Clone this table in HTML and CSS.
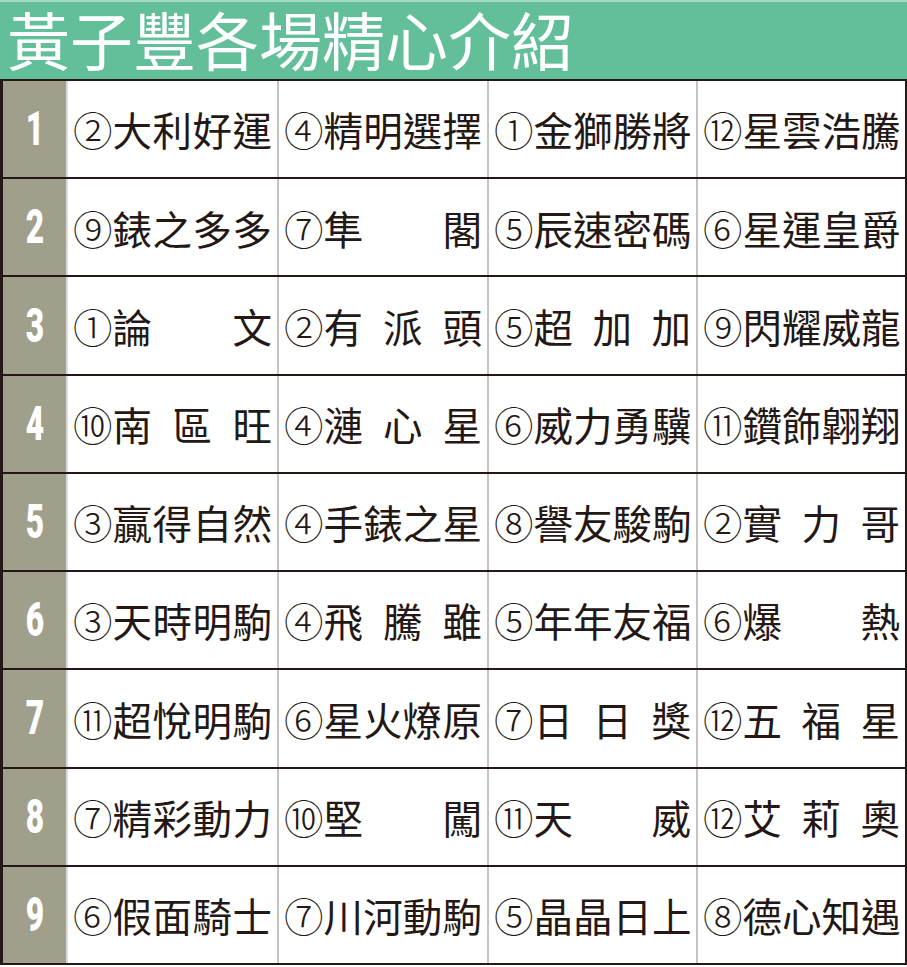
FILE: index.html
```html
<!DOCTYPE html>
<html lang="zh-Hant">
<head>
<meta charset="utf-8">
<title>黃子豐各場精心介紹</title>
<link rel="stylesheet" href="styles.css">
</head>
<body>
<header class="title"><span class="title-text">黃子豐各場精心介紹</span></header>
<main class="board">
  <div class="row">
    <div class="no"><span>1</span></div>
    <div class="cell first"><span class="num">②</span><span class="name"><i>大</i><i>利</i><i>好</i><i>運</i></span></div>
    <div class="cell"><span class="num">④</span><span class="name"><i>精</i><i>明</i><i>選</i><i>擇</i></span></div>
    <div class="cell"><span class="num">①</span><span class="name"><i>金</i><i>獅</i><i>勝</i><i>將</i></span></div>
    <div class="cell"><span class="num">⑫</span><span class="name"><i>星</i><i>雲</i><i>浩</i><i>騰</i></span></div>
  </div>
  <div class="row">
    <div class="no"><span>2</span></div>
    <div class="cell first"><span class="num">⑨</span><span class="name"><i>錶</i><i>之</i><i>多</i><i>多</i></span></div>
    <div class="cell"><span class="num">⑦</span><span class="name"><i>隼</i><i>閣</i></span></div>
    <div class="cell"><span class="num">⑤</span><span class="name"><i>辰</i><i>速</i><i>密</i><i>碼</i></span></div>
    <div class="cell"><span class="num">⑥</span><span class="name"><i>星</i><i>運</i><i>皇</i><i>爵</i></span></div>
  </div>
  <div class="row">
    <div class="no"><span>3</span></div>
    <div class="cell first"><span class="num">①</span><span class="name"><i>論</i><i>文</i></span></div>
    <div class="cell"><span class="num">②</span><span class="name"><i>有</i><i>派</i><i>頭</i></span></div>
    <div class="cell"><span class="num">⑤</span><span class="name"><i>超</i><i>加</i><i>加</i></span></div>
    <div class="cell"><span class="num">⑨</span><span class="name"><i>閃</i><i>耀</i><i>威</i><i>龍</i></span></div>
  </div>
  <div class="row">
    <div class="no"><span>4</span></div>
    <div class="cell first"><span class="num">⑩</span><span class="name"><i>南</i><i>區</i><i>旺</i></span></div>
    <div class="cell"><span class="num">④</span><span class="name"><i>漣</i><i>心</i><i>星</i></span></div>
    <div class="cell"><span class="num">⑥</span><span class="name"><i>威</i><i>力</i><i>勇</i><i>驥</i></span></div>
    <div class="cell"><span class="num">⑪</span><span class="name"><i>鑽</i><i>飾</i><i>翺</i><i>翔</i></span></div>
  </div>
  <div class="row">
    <div class="no"><span>5</span></div>
    <div class="cell first"><span class="num">③</span><span class="name"><i>贏</i><i>得</i><i>自</i><i>然</i></span></div>
    <div class="cell"><span class="num">④</span><span class="name"><i>手</i><i>錶</i><i>之</i><i>星</i></span></div>
    <div class="cell"><span class="num">⑧</span><span class="name"><i>譽</i><i>友</i><i>駿</i><i>駒</i></span></div>
    <div class="cell"><span class="num">②</span><span class="name"><i>實</i><i>力</i><i>哥</i></span></div>
  </div>
  <div class="row">
    <div class="no"><span>6</span></div>
    <div class="cell first"><span class="num">③</span><span class="name"><i>天</i><i>時</i><i>明</i><i>駒</i></span></div>
    <div class="cell"><span class="num">④</span><span class="name"><i>飛</i><i>騰</i><i>雖</i></span></div>
    <div class="cell"><span class="num">⑤</span><span class="name"><i>年</i><i>年</i><i>友</i><i>福</i></span></div>
    <div class="cell"><span class="num">⑥</span><span class="name"><i>爆</i><i>熱</i></span></div>
  </div>
  <div class="row">
    <div class="no"><span>7</span></div>
    <div class="cell first"><span class="num">⑪</span><span class="name"><i>超</i><i>悅</i><i>明</i><i>駒</i></span></div>
    <div class="cell"><span class="num">⑥</span><span class="name"><i>星</i><i>火</i><i>燎</i><i>原</i></span></div>
    <div class="cell"><span class="num">⑦</span><span class="name"><i>日</i><i>日</i><i>獎</i></span></div>
    <div class="cell"><span class="num">⑫</span><span class="name"><i>五</i><i>福</i><i>星</i></span></div>
  </div>
  <div class="row">
    <div class="no"><span>8</span></div>
    <div class="cell first"><span class="num">⑦</span><span class="name"><i>精</i><i>彩</i><i>動</i><i>力</i></span></div>
    <div class="cell"><span class="num">⑩</span><span class="name"><i>堅</i><i>闖</i></span></div>
    <div class="cell"><span class="num">⑪</span><span class="name"><i>天</i><i>威</i></span></div>
    <div class="cell"><span class="num">⑫</span><span class="name"><i>艾</i><i>莉</i><i>奧</i></span></div>
  </div>
  <div class="row">
    <div class="no"><span>9</span></div>
    <div class="cell first"><span class="num">⑥</span><span class="name"><i>假</i><i>面</i><i>騎</i><i>士</i></span></div>
    <div class="cell"><span class="num">⑦</span><span class="name"><i>川</i><i>河</i><i>動</i><i>駒</i></span></div>
    <div class="cell"><span class="num">⑤</span><span class="name"><i>晶</i><i>晶</i><i>日</i><i>上</i></span></div>
    <div class="cell"><span class="num">⑧</span><span class="name"><i>德</i><i>心</i><i>知</i><i>遇</i></span></div>
  </div>
</main>
</body>
</html>
```

FILE: styles.css
```css
html, body {
  margin: 0;
  padding: 0;
  background: #ffffff;
}

body {
  width: 907px;
  font-family: "Noto Sans CJK TC", "Noto Sans CJK JP", sans-serif;
  color: #231815;
}

.title {
  box-sizing: border-box;
  height: 79px;
  background: #63bf99;
  border-top: 2px solid #a3d9c2;
  display: flex;
  align-items: center;
  padding: 0 0 6px 7px;
}

.title-text {
  color: #ffffff;
  font-size: 63px;
  font-weight: 400;
  line-height: 1.1;
  white-space: nowrap;
}

.board {
  box-sizing: border-box;
  height: 886px;
  display: grid;
  grid-template-rows: repeat(9, 1fr);
  row-gap: 2px;
  padding: 2px 2px 2px 3px;
  background: #231815;
}

.row {
  display: grid;
  grid-template-columns: 63px 211px 210px 209px 209px;
  min-height: 0;
}

.no {
  background: #a09f8b;
  display: flex;
  align-items: center;
  justify-content: center;
}

.no span {
  display: block;
  color: #ffffff;
  font-family: Roboto, "Liberation Sans", sans-serif;
  font-weight: 900;
  font-size: 48px;
  line-height: 1;
  transform: scaleX(0.66);
}

.cell {
  background: #ffffff;
  border-left: 2px solid #c4c4c4;
  display: flex;
  align-items: center;
  padding: 0 5px 0 5px;
  font-size: 39.5px;
  line-height: 1;
  white-space: nowrap;
}

.cell.first {
  border-left-color: #dcdcd6;
}

.num {
  flex: none;
  font-family: "Noto Sans CJK JP", "Noto Sans CJK TC", sans-serif;
  font-weight: 300;
}

.name {
  flex: 1;
  display: flex;
  justify-content: space-between;
}

.name i {
  font-style: normal;
}
```
